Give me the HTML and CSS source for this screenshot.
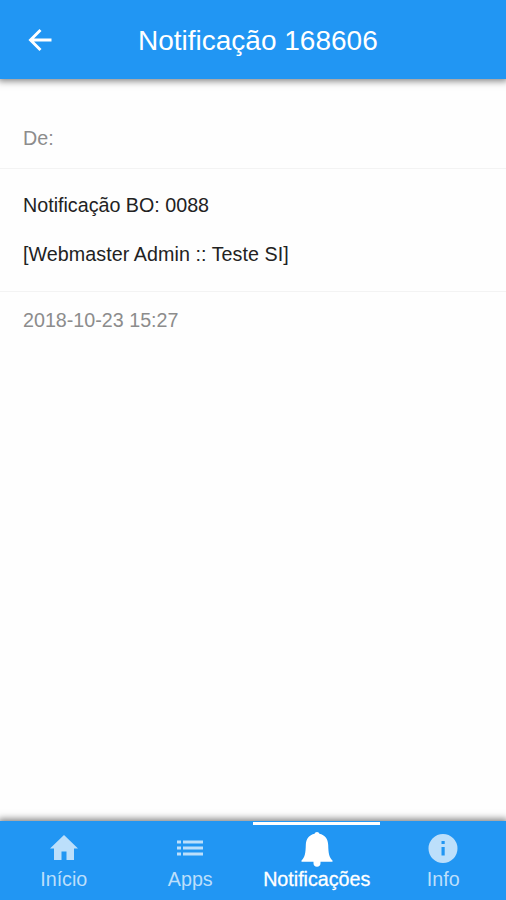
FILE: index.html
```html
<!DOCTYPE html>
<html lang="pt">
<head>
    <meta charset="utf-8">
    <title>Notificação 168606</title>
    <link rel="stylesheet" href="styles.css">
</head>
<body>
    <header class="toolbar">
        <a href="#" class="back-button" aria-label="Voltar">
            <svg width="24" height="24" viewBox="0 0 24 24">
                <path d="M23.500 12H3M12.500 2 2.500 12l10 10" fill="none" stroke="#fff" stroke-width="2.900"/>
            </svg>
        </a>
        <h1 class="toolbar-title">Notificação 168606</h1>
    </header>

    <main class="content">
        <div class="card-header">De:</div>
        <div class="card-body">
            <p>Notificação BO: 0088</p>
            <p class="card-sender">[Webmaster Admin :: Teste SI]</p>
        </div>
        <div class="card-date">2018-10-23 15:27</div>
    </main>

    <nav class="tabs">
        <a href="#" class="tab">
            <svg class="tab-icon" width="34" height="36" viewBox="0 0 34 36">
                <path d="M17 5 3 18.500h4V30h7.500v-8.500h5V30H27V18.500h4z"/>
            </svg>
            <span>Início</span>
        </a>
        <a href="#" class="tab">
            <svg class="tab-icon" width="34" height="36" viewBox="0 0 34 36">
                <path d="M4 10.500h4v3H4zM10 10.500h20v3H10zM4 16.500h4v3H4zM10 16.500h20v3H10zM4 22.500h4v3H4zM10 22.500h20v3H10z"/>
            </svg>
            <span>Apps</span>
        </a>
        <a href="#" class="tab tab-active">
            <svg class="tab-icon" width="34" height="36" viewBox="0 0 34 36">
                <path d="M17 2c1.300 0 2.100.7 2.400 1.800 5.600 1.200 8.600 5 8.800 11.200.2 8 .8 12 4.300 15.500v1.200H1.500v-1.200C5 27 5.600 23 5.800 15c.2-6.200 3.200-10 8.800-11.200.3-1.100 1.100-1.800 2.400-1.800zM13.500 31.700h7v1.500c0 2.200-1.300 3.500-3.500 3.500s-3.500-1.300-3.500-3.500z"/>
            </svg>
            <span>Notificações</span>
        </a>
        <a href="#" class="tab">
            <svg class="tab-icon" width="34" height="36" viewBox="0 0 34 36">
                <path fill-rule="evenodd" d="M17 4a14.500 14.500 0 1 0 0 29 14.500 14.500 0 0 0 0-29zM15.500 11h3.200v3h-3.200zM15.500 17h3.200v8.500h-3.200z"/>
            </svg>
            <span>Info</span>
        </a>
    </nav>
</body>
</html>
```

FILE: styles.css
```css
* {
    box-sizing: border-box;
}

body {
    display: flex;
    flex-direction: column;
    height: 100vh;
    margin: 0;
    background-color: #fefefe;
    color: #222;
    font-family: "Liberation Sans", Arial, sans-serif;
    font-size: 19.7px;
    overflow: hidden;
}

/* Barra superior */
.toolbar {
    display: flex;
    align-items: center;
    height: 79px;
    padding-left: 28px;
    background-color: #2196f3;
    box-shadow: 0 0 7px 2px rgba(0, 0, 0, 0.5);
}

.back-button {
    display: flex;
}

.toolbar-title {
    margin: 2px 0 0 86px;
    color: #fff;
    font-size: 28px;
    font-weight: normal;
    line-height: 32px;
    white-space: nowrap;
}

/* Mensagem */
.content {
    flex: 1;
    padding-top: 29px;
    line-height: 24px;
}

.card-header {
    height: 61px;
    padding: 18px 23px;
    border-bottom: 1px solid #f3f3f3;
    color: #8c8c8c;
}

.card-body {
    height: 123px;
    padding: 24px 23px;
    border-bottom: 1px solid #f3f3f3;
}

.card-body p {
    margin: 0 0 25px;
}

.card-body .card-sender {
    letter-spacing: 0.06px;
}

.card-date {
    padding: 16px 23px;
    color: #8c8c8c;
}

/* Separadores */
.tabs {
    display: flex;
    height: 79px;
    padding-top: 1px;
    background-color: #2196f3;
    box-shadow: 0 0 7px 2px rgba(0, 0, 0, 0.5);
}

.tab {
    display: flex;
    flex: 1;
    flex-direction: column;
    align-items: center;
    padding: 5px 0 0 1px;
    border-top: 3px solid transparent;
    color: #bcdffb;
    line-height: 26px;
    text-decoration: none;
}

.tab-active {
    border-top-color: #fff;
    color: #fff;
    -webkit-text-stroke: 0.3px #fff;
}

.tab-icon {
    flex: none;
    overflow: visible;
    fill: currentColor;
}
```
